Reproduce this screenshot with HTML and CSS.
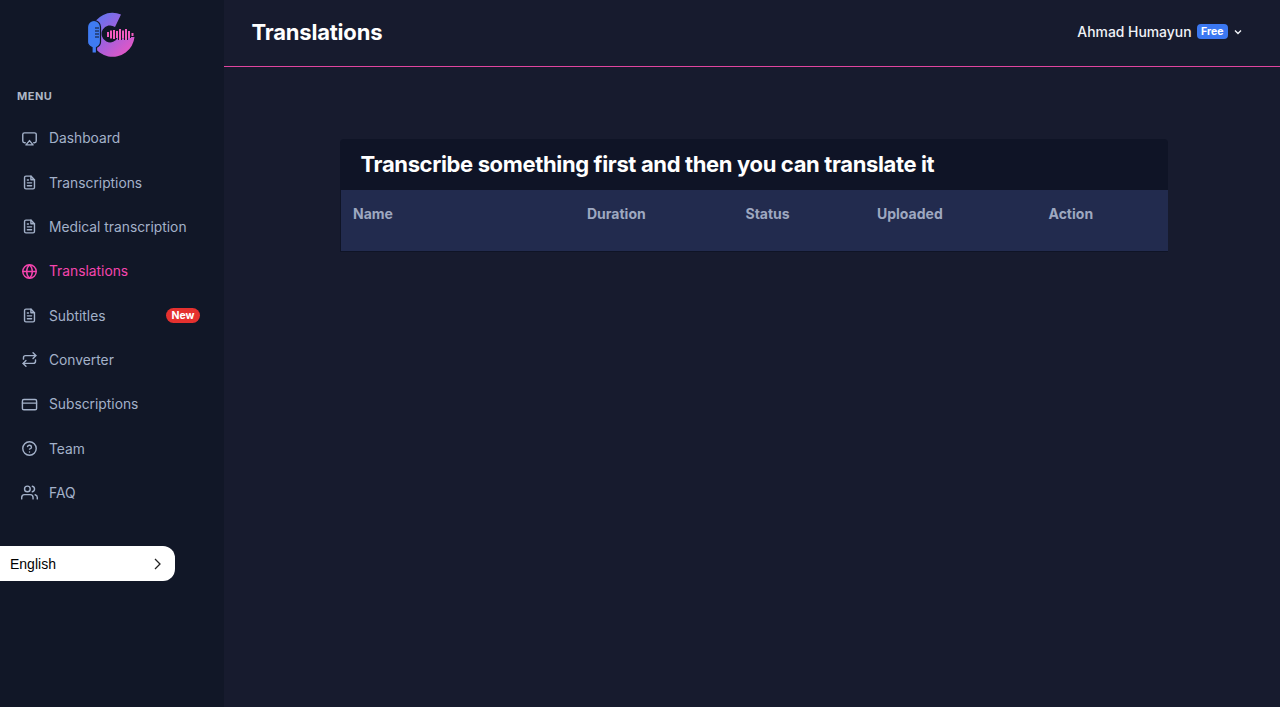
FILE: index.html
```html
<!DOCTYPE html>
<html lang="en">
<head>
  <meta charset="UTF-8">
  <meta name="viewport" content="width=device-width, initial-scale=1.0">
  <title>Translations</title>
  <link rel="stylesheet" href="styles.css">
</head>
<body>
  <div class="app">
    <aside class="sidebar">
      <div class="logo">
        <svg width="48" height="48" viewBox="0 0 48 48">
          <defs>
            <linearGradient id="ring" x1="0" y1="0" x2="1" y2="1">
              <stop offset="0" stop-color="#4f7cf5"/>
              <stop offset="0.5" stop-color="#a45fdc"/>
              <stop offset="1" stop-color="#f655be"/>
            </linearGradient>
          </defs>
          <path d="M34 4.500 A22 22 0 1 0 47.500 27 L31 27 A8.500 8.500 0 1 1 28 17 Z" fill="url(#ring)"/>
          <path d="M0.500 17 a6.500 6.500 0 0 1 13 0 V32 q0 3.500 -4 5.500 V43 H5 V37.500 Q0.500 35.500 0.500 32 Z" fill="#3f7bf2" stroke="#111727" stroke-width="1.200"/>
          <path d="M8 18 h4 M8 21 h4 M8 24 h4 M8 27 h4" stroke="#111727" stroke-width="1"/>
          <path d="M21 22 v5 M24 20.500 v8 M27 20 v9 M30 21 v7 M33 19 v11 M36 20.500 v8 M39 19 v11 M42 21 v7 M45.500 23 v3" stroke="#111727" stroke-width="4" fill="none"/>
          <path d="M21 22 v5 M24 20.500 v8 M27 20 v9 M30 21 v7 M33 19 v11 M36 20.500 v8 M39 19 v11 M42 21 v7 M45.500 23 v3" stroke="#f25cc0" stroke-width="2" fill="none"/>
        </svg>
      </div>
      <h3 class="menu-title">MENU</h3>
      <nav class="menu">
        <a class="menu-item" href="#">
          <svg class="icon" viewBox="0 0 24 24"><path d="M6 18H5a2.500 2.500 0 0 1-2.500-2.500v-9A2.500 2.500 0 0 1 5 4h14a2.500 2.500 0 0 1 2.500 2.500v9A2.500 2.500 0 0 1 19 18h-1"/><path d="M12 15l5 6H7z"/></svg>
          <span>Dashboard</span>
        </a>
        <a class="menu-item" href="#">
          <svg class="icon" viewBox="0 0 24 24"><path d="M14 3H7a2 2 0 0 0-2 2v14a2 2 0 0 0 2 2h10a2 2 0 0 0 2-2V8z"/><path d="M14 3v5h5M9 12.500h6M9 16.500h6M9 8.500h1.500"/></svg>
          <span>Transcriptions</span>
        </a>
        <a class="menu-item" href="#">
          <svg class="icon" viewBox="0 0 24 24"><path d="M14 3H7a2 2 0 0 0-2 2v14a2 2 0 0 0 2 2h10a2 2 0 0 0 2-2V8z"/><path d="M14 3v5h5M9 12.500h6M9 16.500h6M9 8.500h1.500"/></svg>
          <span>Medical transcription</span>
        </a>
        <a class="menu-item active" href="#">
          <svg class="icon" viewBox="0 0 24 24"><circle cx="12" cy="12" r="9.500"/><path d="M2.500 12h19M12 2.500c3 2.800 4 6 4 9.500s-1 6.700-4 9.500c-3-2.800-4-6-4-9.500s1-6.700 4-9.500z"/></svg>
          <span>Translations</span>
        </a>
        <a class="menu-item" href="#">
          <svg class="icon" viewBox="0 0 24 24"><path d="M14 3H7a2 2 0 0 0-2 2v14a2 2 0 0 0 2 2h10a2 2 0 0 0 2-2V8z"/><path d="M14 3v5h5M9 12.500h6M9 16.500h6M9 8.500h1.500"/></svg>
          <span>Subtitles</span>
          <span class="badge-new">New</span>
        </a>
        <a class="menu-item" href="#">
          <svg class="icon" viewBox="0 0 24 24"><path d="M17 2.500l4 4-4 4"/><path d="M3.500 11.500v-2a3 3 0 0 1 3-3H21"/><path d="M7 21.500l-4-4 4-4"/><path d="M20.500 12.500v2a3 3 0 0 1-3 3H3"/></svg>
          <span>Converter</span>
        </a>
        <a class="menu-item" href="#">
          <svg class="icon" viewBox="0 0 24 24"><rect x="2" y="5" width="20" height="14.500" rx="2"/><path d="M2 10h20"/></svg>
          <span>Subscriptions</span>
        </a>
        <a class="menu-item" href="#">
          <svg class="icon" viewBox="0 0 24 24"><circle cx="12" cy="12" r="9.500"/><path d="M9.200 9.300a2.900 2.900 0 0 1 5.600 1c0 1.900-2.800 2.600-2.800 2.600"/><path d="M12 17h.01"/></svg>
          <span>Team</span>
        </a>
        <a class="menu-item" href="#">
          <svg class="icon" viewBox="0 0 24 24"><path d="M17 21v-2a4 4 0 0 0-4-4H5a4 4 0 0 0-4 4v2"/><circle cx="9" cy="7" r="4"/><path d="M23 21v-2a4 4 0 0 0-3-3.900M16 3.100a4 4 0 0 1 0 7.800"/></svg>
          <span>FAQ</span>
        </a>
      </nav>
      <button class="lang">
        <span>English</span>
        <svg width="16" height="16" viewBox="0 0 16 16"><path d="M6 3l5 5-5 5"/></svg>
      </button>
    </aside>
    <div class="main">
      <header class="topbar">
        <h1>Translations</h1>
        <div class="user">
          <span>Ahmad Humayun</span>
          <span class="badge-free">Free</span>
          <svg width="12" height="12" viewBox="0 0 12 12"><path d="M3 4.500L6 7.500l3-3"/></svg>
        </div>
      </header>
      <div class="content">
        <section class="card">
          <h2>Transcribe something first and then you can translate it</h2>
          <table>
            <thead>
              <tr>
                <th class="col-name">Name</th>
                <th class="col-duration">Duration</th>
                <th class="col-status">Status</th>
                <th class="col-uploaded">Uploaded</th>
                <th>Action</th>
              </tr>
            </thead>
          </table>
        </section>
      </div>
    </div>
  </div>
</body>
</html>
```

FILE: styles.css
```css
* {
  box-sizing: border-box;
}
html, body {
  margin: 0;
  height: 100%;
}
body {
  font-family: Inter, "Liberation Sans", sans-serif;
  background-color: #171b2e;
  overflow: hidden;
}
.app {
  display: flex;
  height: 707px;
}

/* sidebar */
.sidebar {
  width: 224px;
  flex-shrink: 0;
  background-color: #111727;
}
.logo {
  display: flex;
  justify-content: center;
  padding: 10px 2px 0 0;
  height: 88px;
}
.menu-title {
  margin: 0;
  padding-left: 17px;
  font-size: 11px;
  line-height: 16px;
  font-weight: 700;
  letter-spacing: 0.5px;
  color: #aeb7c6;
}
.menu {
  display: flex;
  flex-direction: column;
  margin-top: 12px;
}
.menu-item {
  display: flex;
  align-items: center;
  height: 44.35px;
  padding: 0 24px 0 21px;
  font-size: 13.8px;
  color: #a3b1c9;
  text-decoration: none;
}
.icon {
  width: 17px;
  height: 17px;
  margin-right: 11px;
  fill: none;
  stroke: currentColor;
  stroke-width: 2;
  stroke-linecap: round;
  stroke-linejoin: round;
}
.menu-item.active {
  color: #f545ae;
}
.badge-new {
  margin-left: auto;
  padding: 0 5.5px;
  font-size: 10.500px;
  line-height: 15px;
  font-weight: 700;
  color: #fff;
  background-color: #e5312f;
  border-radius: 8px;
}
.lang {
  display: flex;
  align-items: center;
  justify-content: space-between;
  width: 175px;
  height: 35px;
  margin-top: 30.6px;
  padding: 2px 10px 0 10px;
  font-family: "Liberation Sans", sans-serif;
  font-size: 14px;
  color: #000;
  background-color: #fff;
  border: none;
  border-radius: 0 12px 12px 0;
}
.lang svg {
  fill: none;
  stroke: #222;
  stroke-width: 1.300;
}

/* header */
.main {
  flex: 1;
}
.topbar {
  display: flex;
  align-items: center;
  justify-content: space-between;
  height: 67px;
  padding: 0 36px 3px 27.5px;
  border-bottom: 1px solid #e0459f;
}
.topbar h1 {
  margin: 0;
  font-size: 22px;
  font-weight: 700;
  letter-spacing: -0.2px;
  color: #fff;
}
.user {
  display: flex;
  align-items: center;
  font-size: 13.9px;
  font-weight: 500;
  color: #f1f3f8;
}
.badge-free {
  margin: 0 4px 0 5px;
  padding: 0 4.5px;
  font-size: 10.500px;
  line-height: 15px;
  font-weight: 700;
  color: #fff;
  background-color: #3b78f2;
  border-radius: 4px;
}
.user svg {
  fill: none;
  stroke: #f1f3f8;
  stroke-width: 1.400;
}

/* card */
.content {
  padding: 72px 112px 0 116px;
}
.card {
  padding: 0 0 1px 1px;
  background-color: #0f1426;
  border-radius: 4px 4px 0 0;
}
.card h2 {
  margin: 0;
  height: 51px;
  padding-left: 19.5px;
  font-size: 22px;
  line-height: 50px;
  font-weight: 700;
  letter-spacing: -0.36px;
  color: #fff;
}
table {
  width: 100%;
  border-collapse: collapse;
  table-layout: fixed;
  background-color: #222b4e;
}
th {
  height: 61px;
  padding: 0 0 15px 12px;
  font-size: 14px;
  font-weight: 700;
  text-align: left;
  color: #9ea8c0;
}
.col-name {
  width: 234px;
}
.col-duration {
  width: 158.5px;
}
.col-status {
  width: 131.5px;
}
.col-uploaded {
  width: 171.5px;
}
```
